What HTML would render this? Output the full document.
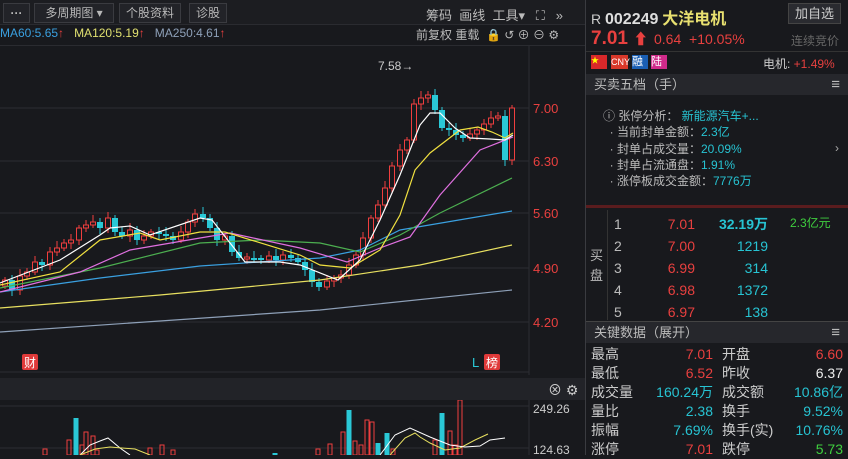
<!DOCTYPE html>
<html><head><meta charset="utf-8"><style>
*{margin:0;padding:0;box-sizing:border-box}
body{width:848px;height:455px;overflow:hidden;background:#18191d;font-family:"Liberation Sans","Noto Sans CJK SC",sans-serif;color:#c8c8c8;position:relative;font-size:12px}
.a{position:absolute;white-space:nowrap}
.btn{position:absolute;top:3px;height:20px;border:1px solid #3a3b40;background:#222328;color:#b8b8b8;font-size:12px;line-height:18px;text-align:center}
.red{color:#e8403f}.cy{color:#27c3d2}.gr{color:#3fcf3f}
.r{position:absolute;left:586px;width:262px}
.hd{background:#26272c;color:#bbb;font-size:13px;padding-left:8px}
</style></head><body>
<div class="a" style="left:0;top:0;width:586px;height:25px;background:#1c1d21;border-bottom:1px solid #2a2b30"></div>
<div class="btn" style="left:3px;width:27px;font-weight:bold">···</div>
<div class="btn" style="left:34px;width:80px">多周期图 ▾</div>
<div class="btn" style="left:119px;width:62px">个股资料</div>
<div class="btn" style="left:189px;width:38px">诊股</div>
<div class="a" style="left:426px;top:5px;font-size:13px;color:#bbb">筹码&nbsp;&nbsp;画线&nbsp;&nbsp;工具▾&nbsp;&nbsp;&nbsp;⛶&nbsp;&nbsp;&nbsp;»</div>
<div class="a" style="left:0;top:26px;font-size:12px"><span style="color:#3aa0e0">MA60:5.65</span><span class="red">↑</span>&nbsp;&nbsp;&nbsp;<span style="color:#e0e070">MA120:5.19</span><span class="red">↑</span>&nbsp;&nbsp;&nbsp;<span style="color:#8ea0b8">MA250:4.61</span><span class="red">↑</span></div>
<div class="a" style="left:416px;top:26px;font-size:12px;color:#bbb">前复权&nbsp;重载&nbsp;&nbsp;🔒&nbsp;↺&nbsp;⊕&nbsp;⊖&nbsp;⚙</div>
<div class="a" style="left:0;top:45px;width:586px;height:1px;background:#2a2b30"></div>
<svg class="a" style="left:0;top:46px" width="586" height="409" id="ch"></svg>
<div class="a" style="left:0;top:378px;width:586px;height:22px;background:#222328"></div>
<div class="a" style="left:548px;top:380px;font-size:14px;color:#ccc">⊗&nbsp;⚙</div>
<div class="a" style="left:585px;top:0;width:1px;height:455px;background:#3a3b40"></div>
<div class="r" style="top:0;height:455px;background:#18191d"></div>
<div class="a" style="left:591px;top:5px;font-size:14px;color:#ccc">R <b style="font-size:16px;color:#ddd">002249</b> <b style="font-size:16px;color:#e8e070">大洋电机</b></div>
<div class="a" style="left:788px;top:3px;width:53px;height:21px;border:1px solid #444;background:#2a2b30;color:#ccc;font-size:13px;text-align:center;line-height:19px">加自选</div>
<div class="a red" style="left:591px;top:28px;font-size:19px;font-weight:bold">7.01 <span style="font-size:15px">⬆</span></div>
<div class="a red" style="left:654px;top:31px;font-size:14px">0.64&nbsp;&nbsp;+10.05%</div>
<div class="a" style="left:791px;top:32px;font-size:12px;color:#666">连续竞价</div>
<div class="a" style="left:586px;top:51px;width:262px;height:1px;background:#333"></div>
<div class="a" style="left:591px;top:55px;width:16px;height:14px;background:#d8282a;color:#ff0;font-size:8px">★</div>
<div class="a" style="left:611px;top:55px;width:17px;height:14px;background:#d8382a;color:#fff;font-size:9px;line-height:14px">CNY</div>
<div class="a" style="left:632px;top:55px;width:16px;height:14px;background:#1a5fb4;color:#fff;font-size:11px;line-height:14px">融</div>
<div class="a" style="left:651px;top:55px;width:16px;height:14px;background:#d02a8a;color:#fff;font-size:11px;line-height:14px">陆</div>
<div class="a" style="left:763px;top:55px;font-size:12px;color:#ccc">电机: <span class="red">+1.49%</span></div>
<div class="r hd" style="top:74px;height:21px;line-height:21px">买卖五档（手）<span style="float:right;margin-right:8px;font-size:15px">≡</span></div>
<div class="a" style="left:603px;top:108px;font-size:12px;line-height:16.3px;color:#bbb">ⓘ 张停分析： <span class="cy">新能源汽车+...</span><br>&nbsp;&nbsp;· 当前封单金额：<span class="cy">2.3亿</span><br>&nbsp;&nbsp;· 封单占成交量：<span class="cy">20.09%</span><br>&nbsp;&nbsp;· 封单占流通盘：<span class="cy">1.91%</span><br>&nbsp;&nbsp;· 涨停板成交金额：<span class="cy">7776万</span></div>
<div class="a" style="left:835px;top:141px;color:#aaa">›</div>
<div class="a" style="left:586px;top:205px;width:262px;height:3px;background:#5a1c1e"></div>
<div class="a" style="left:607px;top:210px;width:1px;height:110px;background:#333"></div>
<div class="a" style="left:590px;top:246px;font-size:13px;line-height:20px;color:#bbb">买<br>盘</div>
<div class="a" style="left:614px;top:213px;font-size:14px;line-height:22px;color:#bbb">1<br>2<br>3<br>4<br>5</div>
<div class="a red" style="left:640px;top:213px;width:55px;text-align:right;font-size:14px;line-height:22px">7.01<br>7.00<br>6.99<br>6.98<br>6.97</div>
<div class="a cy" style="left:700px;top:213px;width:68px;text-align:right;font-size:14px;line-height:22px"><b>32.19万</b><br>1219<br>314<br>1372<br>138</div>
<div class="a gr" style="left:790px;top:214px;font-size:12px">2.3亿元</div>
<div class="a" style="left:586px;top:321px;width:262px;height:1px;background:#444"></div>
<div class="r hd" style="top:322px;height:21px;line-height:21px">关键数据（展开）<span style="float:right;margin-right:8px;font-size:15px">≡</span></div>
<div class="a" style="left:591px;top:345px;font-size:14px;line-height:19px;color:#ccc">最高<br>最低<br>成交量<br>量比<br>振幅<br>涨停</div>
<div class="a" style="left:650px;top:345px;width:63px;text-align:right;font-size:14px;line-height:19px"><span class="red">7.01</span><br><span class="red">6.52</span><br><span class="cy">160.24万</span><br><span class="cy">2.38</span><br><span class="cy">7.69%</span><br><span class="red">7.01</span></div>
<div class="a" style="left:722px;top:345px;font-size:14px;line-height:19px;color:#ccc">开盘<br>昨收<br>成交额<br>换手<br>换手(实)<br>跌停</div>
<div class="a" style="left:780px;top:345px;width:63px;text-align:right;font-size:14px;line-height:19px"><span class="red">6.60</span><br><span style="color:#eee">6.37</span><br><span class="cy">10.86亿</span><br><span class="cy">9.52%</span><br><span class="cy">10.76%</span><br><span class="gr">5.73</span></div>
<script>
var s=document.getElementById('ch'),h='';
function Y(y){return y-46}
[108,161,213,268,322,372].forEach(function(y){h+='<line x1="0" x2="529" y1="'+Y(y)+'" y2="'+Y(y)+'" stroke="#2c2d32"/>'});
h+='<line x1="529" x2="529" y1="0" y2="'+Y(375)+'" stroke="#2c2d32"/>';
[['7.00',108],['6.30',161],['5.60',213],['4.90',268],['4.20',322]].forEach(function(a){h+='<text x="533" y="'+(Y(a[1])+5)+'" fill="#e8403f" font-size="13" font-family="Liberation Sans">'+a[0]+'</text>'});
var pts=[[5,280],[12,290],[20,276],[27,272],[35,262],[42,265],[50,252],[57,248],[64,243],[71,240],[79,228],[86,225],[93,222],[100,228],[108,218],[115,232],[122,236],[130,230],[137,240],[144,236],[151,232],[159,234],[166,236],[173,240],[181,232],[188,222],[195,214],[203,218],[210,228],[217,240],[225,236],[232,252],[239,258],[247,257],[254,258],[261,260],[269,256],[276,260],[283,255],[291,258],[298,262],[305,270],[312,282],[319,287],[327,281],[334,278],[341,275],[349,265],[356,255],[363,238],[371,218],[378,205],[385,188],[392,166],[400,150],[407,140],[414,104],[421,98],[428,95],[435,110],[442,128],[449,130],[456,135],[463,138],[470,134],[477,130],[484,124],[491,118],[498,116],[505,160],[512,108]];
var prev=pts[0][1]+6;
pts.forEach(function(p,i){var x=p[0],c=p[1],o=prev;var up=c<o;var top=Math.min(c,o)-3-(i*7%5),bot=Math.max(c,o)+3+(i*3%4);if(Math.abs(c-o)<2){o=c+2}
var col=up?'#f03e3e':'#2ac8d6';h+='<line x1="'+x+'" x2="'+x+'" y1="'+Y(top)+'" y2="'+Y(bot)+'" stroke="'+col+'"/>';
var y1=Math.min(c,o),hh=Math.max(2,Math.abs(c-o));
if(up)h+='<rect x="'+(x-2.5)+'" y="'+Y(y1)+'" width="5" height="'+hh+'" fill="#18191d" stroke="'+col+'"/>';else h+='<rect x="'+(x-3)+'" y="'+Y(y1)+'" width="6" height="'+hh+'" fill="'+col+'"/>';prev=c;});
h+='<text x="378" y="'+Y(70)+'" fill="#ccc" font-size="12" font-family="Liberation Sans">7.58→</text>';
function L(a,c,w){h+='<polyline fill="none" stroke="'+c+'" stroke-width="'+(w||1.2)+'" points="'+a.map(function(p){return p[0]+','+Y(p[1])}).join(' ')+'"/>'}
L([[0,332],[320,310],[512,290]],'#8ea0b8');
L([[0,308],[160,295],[320,280],[420,265],[512,245]],'#e8e060');
L([[0,292],[100,278],[200,266],[320,258],[360,250],[400,230],[512,211]],'#3aa0e0');
L([[0,288],[100,268],[200,243],[260,240],[320,243],[360,252],[400,235],[440,213],[512,178]],'#4caf50');
L([[0,292],[80,272],[130,250],[200,238],[230,233],[300,248],[347,262],[380,248],[410,237],[440,195],[480,150],[513,137]],'#e070e0');
L([[0,285],[60,272],[100,240],[140,233],[160,240],[200,232],[225,232],[300,255],[320,265],[350,268],[380,250],[400,215],[415,170],[430,153],[460,130],[478,127],[492,132],[505,138],[513,133]],'#f0e040');
L([[0,283],[60,260],[100,235],[110,228],[130,226],[150,235],[200,218],[212,220],[245,262],[280,262],[300,265],[338,280],[360,260],[380,220],[400,175],[420,125],[430,113],[440,113],[455,128],[470,138],[490,139],[505,140],[513,135]],'#ffffff');
h+='<rect x="22" y="'+Y(354)+'" width="16" height="16" rx="2" fill="#e03a3a"/><text x="24" y="'+Y(367)+'" fill="#fff" font-size="12">财</text>';
h+='<text x="472" y="'+Y(367)+'" fill="#2ac8d6" font-size="13">L</text><rect x="484" y="'+Y(354)+'" width="16" height="16" rx="2" fill="#e03a3a"/><text x="486" y="'+Y(367)+'" fill="#fff" font-size="12">榜</text>';
[406,448].forEach(function(y){h+='<line x1="0" x2="529" y1="'+Y(y)+'" y2="'+Y(y)+'" stroke="#2c2d32"/>'});
h+='<line x1="529" x2="529" y1="'+Y(400)+'" y2="409" stroke="#2c2d32"/>';
h+='<text x="533" y="'+Y(413)+'" fill="#ccc" font-size="12">249.26</text><text x="533" y="'+Y(454)+'" fill="#ccc" font-size="12">124.63</text>';
var vb=[[45,449,1],[69,440,1],[76,418,0],[82,445,1],[86,432,1],[93,436,1],[97,450,1],[150,448,1],[162,445,1],[173,450,1],[275,453,0],[318,449,1],[330,444,1],[343,432,1],[349,410,0],[355,441,1],[361,445,1],[367,420,1],[372,422,1],[378,443,0],[387,433,0],[393,449,1],[435,440,1],[442,413,0],[450,431,1],[455,445,1],[460,400,1]];
vb.forEach(function(v){var c=v[2]?'#f03e3e':'#2ac8d6';if(v[2])h+='<rect x="'+(v[0]-2)+'" y="'+Y(v[1])+'" width="4" height="'+(455-v[1])+'" fill="none" stroke="'+c+'"/>';else h+='<rect x="'+(v[0]-2.5)+'" y="'+Y(v[1])+'" width="5" height="'+(455-v[1])+'" fill="'+c+'"/>'});
L([[80,455],[90,445],[100,441],[108,438],[120,448],[130,455]],'#fff',1);
L([[80,455],[95,449],[110,447],[135,449],[150,455]],'#e8e060',1);
L([[390,455],[405,438],[415,433],[420,437],[430,443],[445,450],[460,448],[475,440],[488,434]],'#e8e060',1);
L([[380,455],[395,435],[410,428],[430,437],[450,445],[465,447],[480,446],[490,440],[505,438]],'#fff',1);
s.innerHTML=h;
</script>
</body></html>
